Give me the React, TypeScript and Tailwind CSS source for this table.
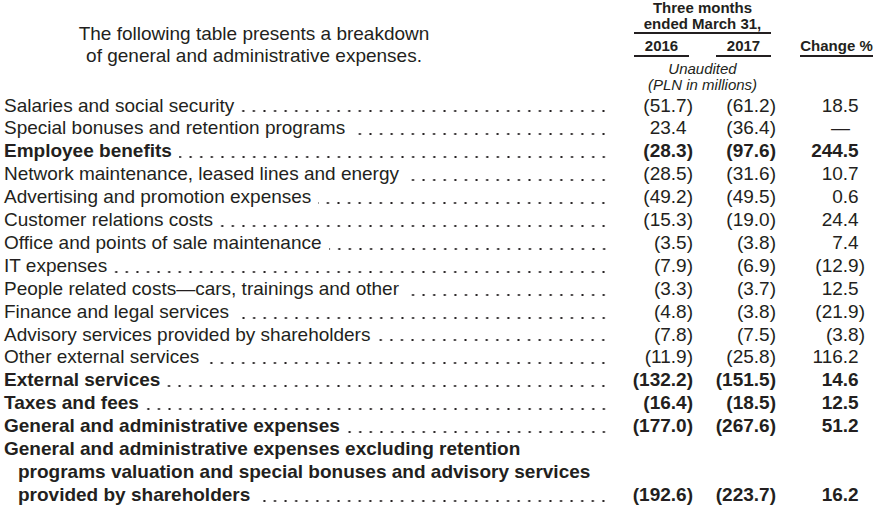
type Row = {
  label: string;
  y2016: string;
  y2017: string;
  change: string;
  bold?: boolean;
};

const ROWS: Row[] = [
  { label: "Salaries and social security", y2016: "(51.7)", y2017: "(61.2)", change: "18.5" },
  { label: "Special bonuses and retention programs", y2016: "23.4", y2017: "(36.4)", change: "—" },
  { label: "Employee benefits", y2016: "(28.3)", y2017: "(97.6)", change: "244.5", bold: true },
  { label: "Network maintenance, leased lines and energy", y2016: "(28.5)", y2017: "(31.6)", change: "10.7" },
  { label: "Advertising and promotion expenses", y2016: "(49.2)", y2017: "(49.5)", change: "0.6" },
  { label: "Customer relations costs", y2016: "(15.3)", y2017: "(19.0)", change: "24.4" },
  { label: "Office and points of sale maintenance", y2016: "(3.5)", y2017: "(3.8)", change: "7.4" },
  { label: "IT expenses", y2016: "(7.9)", y2017: "(6.9)", change: "(12.9)" },
  { label: "People related costs—cars, trainings and other", y2016: "(3.3)", y2017: "(3.7)", change: "12.5" },
  { label: "Finance and legal services", y2016: "(4.8)", y2017: "(3.8)", change: "(21.9)" },
  { label: "Advisory services provided by shareholders", y2016: "(7.8)", y2017: "(7.5)", change: "(3.8)" },
  { label: "Other external services", y2016: "(11.9)", y2017: "(25.8)", change: "116.2" },
  { label: "External services", y2016: "(132.2)", y2017: "(151.5)", change: "14.6", bold: true },
  { label: "Taxes and fees", y2016: "(16.4)", y2017: "(18.5)", change: "12.5", bold: true },
  { label: "General and administrative expenses", y2016: "(177.0)", y2017: "(267.6)", change: "51.2", bold: true },
];

// positive numbers get an invisible ")" so the digits line up with the bracketed ones
function Num({ value }: { value: string }) {
  if (value === "—") {
    return <span className="mr-[15px]">—</span>;
  }
  const neg = value.startsWith("(");
  return (
    <span>
      {value}
      {!neg && <span className="invisible">)</span>}
    </span>
  );
}

function Leader() {
  return (
    <span className="ml-[7px] mb-[5px] h-[2px] flex-1 self-end bg-[radial-gradient(circle,#231f20_0.9px,transparent_1.3px)] bg-[length:10.6px_2px] bg-right bg-repeat-x" />
  );
}

function LineRow({
  label,
  indent,
  bold,
  values,
}: {
  label: string;
  indent?: boolean;
  bold?: boolean;
  values?: Row;
}) {
  return (
    <div
      className={`grid grid-cols-[609px_84px_83px_89px] leading-[22.9px] ${bold ? "font-bold" : ""}`}
    >
      <div className={`flex ${indent ? "pl-[18px]" : "pl-[4px]"}`}>
        <span className="whitespace-nowrap">{label}</span>
        {values && <Leader />}
      </div>
      <div className="text-right">{values && <Num value={values.y2016} />}</div>
      <div className="text-right">{values && <Num value={values.y2017} />}</div>
      <div className="text-right">{values && <Num value={values.change} />}</div>
    </div>
  );
}

export default function App() {
  const last: Row = {
    label: "provided by shareholders",
    y2016: "(192.6)",
    y2017: "(223.7)",
    change: "16.2",
  };

  return (
    <div className="h-[509px] w-[875px] overflow-hidden bg-white font-['Liberation_Sans',Arial,sans-serif] text-[19px] text-[#231f20]">
      {/* header */}
      <div className="flex">
        <div className="w-[634px]">
          <p className="mt-[23px] w-[508px] text-center leading-[22px]">
            The following table presents a breakdown
            <br />
            of general and administrative expenses.
          </p>
        </div>
        <div className="flex w-[137px] flex-col text-[15px]">
          <div className="border-b-2 border-[#231f20] pb-[1px] text-center font-bold leading-[15.5px]">
            Three months
            <br />
            ended March 31,
          </div>
          <div className="mt-[4px] flex justify-between font-bold leading-[15px]">
            <span className="w-[55px] border-b-2 border-[#231f20] pb-[2px] text-center">2016</span>
            <span className="w-[55px] border-b-2 border-[#231f20] pb-[2px] text-center">2017</span>
          </div>
          <div className="mt-[4px] text-center italic leading-[16px]">
            Unaudited
            <br />
            (PLN in millions)
          </div>
        </div>
        <div className="ml-[29px] w-[73px] text-[15px]">
          <div className="mt-[38px] whitespace-nowrap border-b-2 border-[#231f20] pb-[2px] text-center font-bold leading-[15px]">
            Change %
          </div>
        </div>
      </div>

      {/* body */}
      <div className="mt-[1.5px]">
        {ROWS.map((row) => (
          <LineRow key={row.label} label={row.label} bold={row.bold} values={row} />
        ))}
        <LineRow label="General and administrative expenses excluding retention" bold />
        <LineRow
          label="programs valuation and special bonuses and advisory services"
          indent
          bold
        />
        <LineRow label={last.label} indent bold values={last} />
      </div>
    </div>
  );
}
